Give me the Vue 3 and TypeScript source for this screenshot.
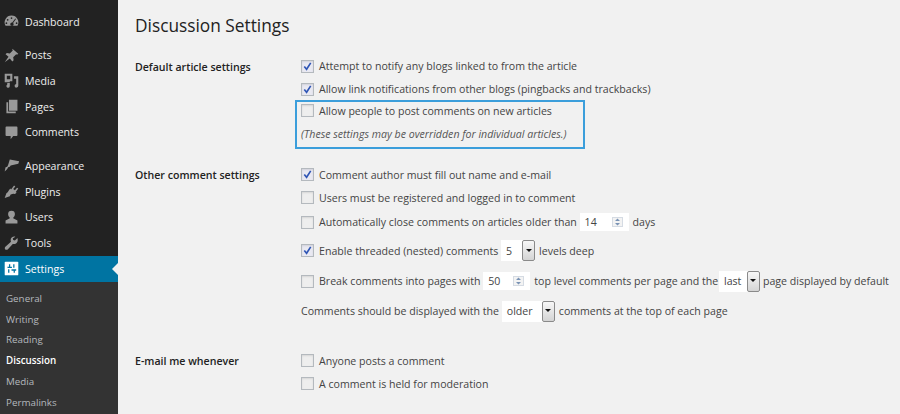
<script setup lang="ts">
interface MenuItem { label: string; icon: string; gap?: boolean; active?: boolean }
const topItems: MenuItem[] = [
  { label: 'Dashboard', icon: 'M10 3a8 8 0 0 0-7 12h14a8 8 0 0 0-7-12zM10 5a1 1 0 1 1 0 2 1 1 0 0 1 0-2zM5.500 7a1 1 0 1 1 0 2 1 1 0 0 1 0-2zM14.500 6.500l.8.6-3.400 4.600a2 2 0 1 1-1-.5zM4 11a1 1 0 1 1 0 2 1 1 0 0 1 0-2zM16 11a1 1 0 1 1 0 2 1 1 0 0 1 0-2z' },
  { label: 'Posts', icon: 'M11 2l7 6-1.500 1-1-.5-3.500 3.500.5 3.500-1.500 1.500-3-3.500L2 18l4.500-6.500L3 8.500 4.500 7l3.500.5L11.500 4l-.5-1z', gap: true },
  { label: 'Media', icon: 'M2 2h9v9H8v1H2zM4.500 4.500v4h4v-4zM5 13h3v3.500a2 2 0 1 1-3-1.700zM13 5h5v11a2.200 2.200 0 1 1-2.500-2V8H13z' },
  { label: 'Pages', icon: 'M7 2h10v13H7zM4 5h2v11h9v2H4z' },
  { label: 'Comments', icon: 'M4 3h12a1 1 0 0 1 1 1v9a1 1 0 0 1-1 1h-4l-3 4v-4H4a1 1 0 0 1-1-1V4a1 1 0 0 1 1-1z' },
  { label: 'Appearance', icon: 'M8 3l11 2-1 3-9 2-1 1.500-2 .5-1 2L2 17l1-5 2-.5L6 9.500z', gap: true },
  { label: 'Plugins', icon: 'M13 3l1.500 1-2.500 3 2 1.500 2.500-3L18 6.500l-3 4 1 1-2 1.500-2-.5-3 1-1 2-6 2 2-5.500 1.500-1L7 8.500 8.500 6.500l1 1z' },
  { label: 'Users', icon: 'M10 2a4 4 0 0 1 4 4c0 2-1 3.500-2 4.200V11l5 2.500V17H3v-3.500L8 11v-.8C7 9.500 6 8 6 6a4 4 0 0 1 4-4z' },
  { label: 'Tools', icon: 'M17 3.500l-3 3-2-.5-.5-2 3-2c-3-.5-5.500 1-5.500 4 0 .8.200 1.500.4 2L2.500 14c-1.500 2 1 4.500 3 3l6-6.500c3 1 7-1.500 5.500-7z' },
  { label: 'Settings', icon: '', active: true },
]
const subItems = ['General', 'Writing', 'Reading', 'Discussion', 'Media', 'Permalinks']
</script>

<template>
  <div class="page">
    <aside class="side">
      <ul class="menu">
        <li v-for="it in topItems" :key="it.label" class="item" :class="{ gap: it.gap, active: it.active }">
          <svg v-if="it.icon" class="ico" viewBox="0 0 20 20"><path :d="it.icon" fill-rule="evenodd" /></svg>
          <svg v-else class="ico" viewBox="0 0 20 20">
            <rect x="2" y="2" width="16" height="16" rx="1" fill="#fff" />
            <path d="M5 8h2V5h1.500v3h2v1.500h-5zM6 11h1.500v4H6zM12 5h1.500v4H12zM10 11h5.500v1.500H14V15h-1.500v-2.500H10z" fill="#0074a2" />
          </svg>
          <span>{{ it.label }}</span>
        </li>
      </ul>
      <ul class="sub">
        <li v-for="s in subItems" :key="s" :class="{ cur: s === 'Discussion' }">{{ s }}</li>
      </ul>
    </aside>

    <main class="main">
      <h1>Discussion Settings</h1>

      <section class="row first">
        <h2>Default article settings</h2>
        <div class="col">
          <div class="line"><span class="cb on"><svg viewBox="0 0 12 12"><path d="M2.500 6l2.500 3L9.500 2" /></svg></span>Attempt to notify any blogs linked to from the article</div>
          <div class="line"><span class="cb on"><svg viewBox="0 0 12 12"><path d="M2.500 6l2.500 3L9.500 2" /></svg></span>Allow link notifications from other blogs (pingbacks and trackbacks)</div>
          <div class="hl">
            <div class="line hl-a"><span class="cb"></span>Allow people to post comments on new articles</div>
            <div class="line hl-b note">(These settings may be overridden for individual articles.)</div>
          </div>
        </div>
      </section>

      <section class="row second">
        <h2>Other comment settings</h2>
        <div class="col">
          <div class="line"><span class="cb on"><svg viewBox="0 0 12 12"><path d="M2.500 6l2.500 3L9.500 2" /></svg></span>Comment author must fill out name and e-mail</div>
          <div class="line"><span class="cb"></span>Users must be registered and logged in to comment</div>
          <div class="line l25"><span class="cb"></span>Automatically close comments on articles older than <span class="num w14">14<svg class="spin" viewBox="0 0 11 10"><rect x=".5" y=".5" width="10" height="9" /><path d="M5.500 1.500l2.500 2.500H3zM5.500 8.500L3 6h5z" /></svg></span>days</div>
          <div class="line l29"><span class="cb on"><svg viewBox="0 0 12 12"><path d="M2.500 6l2.500 3L9.500 2" /></svg></span>Enable threaded (nested) comments <span class="sel s5">5<i class="arrow"></i></span>levels deep</div>
          <div class="line l30"><span class="cb"></span>Break comments into pages with <span class="num w50">50<svg class="spin" viewBox="0 0 11 10"><rect x=".5" y=".5" width="10" height="9" /><path d="M5.500 1.500l2.500 2.500H3zM5.500 8.500L3 6h5z" /></svg></span>top level comments per page and the <span class="sel slast">last<i class="arrow"></i></span>page displayed by default</div>
          <div class="line l30">Comments should be displayed with the <span class="sel solder">older<i class="arrow"></i></span>comments at the top of each page</div>
        </div>
      </section>

      <section class="row third">
        <h2>E-mail me whenever</h2>
        <div class="col">
          <div class="line"><span class="cb"></span>Anyone posts a comment</div>
          <div class="line"><span class="cb"></span>A comment is held for moderation</div>
        </div>
      </section>
    </main>
  </div>
</template>

<style>
html, body { margin: 0; padding: 0; }
</style>

<style scoped>
.page { display: flex; width: 900px; height: 414px; overflow: hidden; background: #f1f1f1; font-family: "Open Sans", sans-serif; font-size: 10.6px; color: #444; }
.side { width: 118px; flex: none; background: #222; }
ul { list-style: none; margin: 0; padding: 0; }
.menu { padding-top: 8.700px; }
.item { display: flex; align-items: center; height: 25.700px; padding-left: 3px; color: #eee; position: relative; }
.item.gap { margin-top: 8px; }
.ico { width: 17px; height: 17px; margin-right: 5px; fill: #999; flex: none; }
.item.active { background: #0074a2; color: #fff; height: 26px; }
.item.active::after { content: ""; position: absolute; right: 0; top: 7px; border: 6px solid transparent; border-right-color: #f1f1f1; border-left: 0; }
.sub { background: #333; padding-top: 7px; height: 140px; }
.sub li { height: 20.800px; line-height: 20.800px; padding-left: 6px; font-size: 9.800px; color: #b4b9be; }
.sub li.cur { color: #fff; font-weight: 600; }
.main { flex: 1; padding: 0 0 0 17px; min-width: 0; }
h1 { margin: 0; padding-top: 13px; font-size: 17.300px; line-height: 26px; font-weight: 400; color: #222; }
.row { display: flex; }
.row.first { margin-top: 15.500px; }
.row.second { margin-top: 14.500px; }
.row.third { margin-top: 23px; }
h2 { width: 166px; flex: none; margin: 0; font-size: 10.600px; line-height: 24px; font-weight: 600; color: #222; }
.col { flex: 1; min-width: 0; }
.line { display: flex; align-items: center; height: 23px; white-space: pre; }
.l25 { height: 26px; }
.l29 { height: 31px; }
.l30 { height: 30px; }
.cb { width: 11px; height: 11px; border: 1px solid #b4b9be; background: #eee; box-shadow: inset 0 1px 2px rgba(0,0,0,.1); margin-right: 5px; flex: none; display: inline-flex; }
.cb.on { background: #e9e9f2; }
.cb svg { width: 11px; height: 11px; fill: none; stroke: #2f55b5; stroke-width: 1.800; }
.hl { box-sizing: border-box; width: 290px; height: 49px; margin: -1px 0 0 -6px; padding-left: 4px; border: 2px solid #3b9edb; }
.hl-a { height: 18px; }
.hl-b { height: 18px; margin-top: 5px; }
.note { font-style: italic; color: #555; }
.num, .sel { position: relative; display: inline-flex; align-items: center; background: #fff; margin: 0 4px 0 0; padding-left: 5px; box-sizing: border-box; flex: none; }
.num { height: 18px; }
.sel { height: 21px; }
.w14 { width: 49px; }
.w50 { width: 47px; }
.s5 { width: 34px; }
.slast { width: 41px; margin: 0 3px 0 -2px; }
.solder { width: 53px; }
.spin { position: absolute; right: 6px; top: 4px; width: 11px; height: 10px; }
.spin rect { fill: #f3f3f3; stroke: #d5dbe3; }
.spin path { fill: #7a93b5; }
.arrow { position: absolute; right: 0; top: 0; width: 13px; height: 100%; background: linear-gradient(#f7f7f7, #d4d4d4); border: 1px solid #8a8a8a; box-sizing: border-box; border-radius: 2px; }
.arrow::after { content: ""; position: absolute; left: 2.500px; top: 7.500px; border: 3px solid transparent; border-top: 3px solid #111; border-bottom: 0; }
</style>
